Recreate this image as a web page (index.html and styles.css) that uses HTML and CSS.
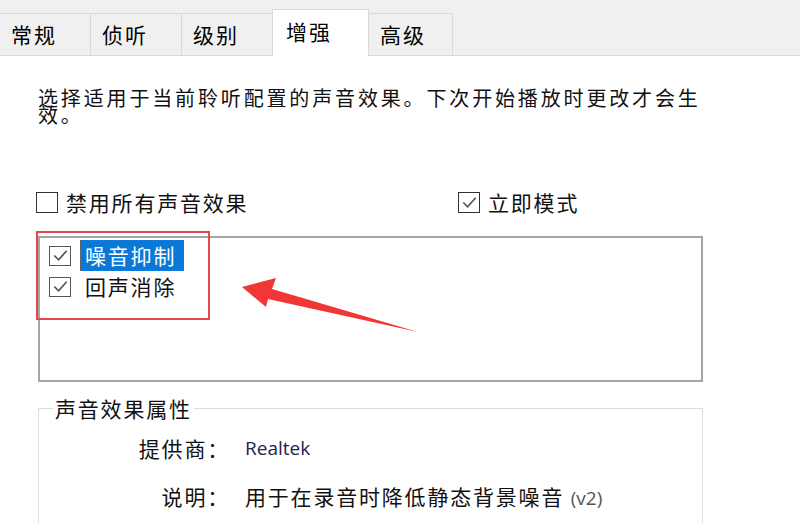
FILE: index.html
```html
<!DOCTYPE html>
<html lang="zh-CN">
<head>
    <meta charset="UTF-8">
    <meta name="viewport" content="width=device-width, initial-scale=1.0">
    <title>增强</title>
    <link rel="stylesheet" href="styles.css">
</head>
<body>
    <div class="tabs">
        <div class="tab t1">常规</div>
        <div class="tab t2">侦听</div>
        <div class="tab t3">级别</div>
        <div class="tab active">增强</div>
        <div class="tab t5">高级</div>
    </div>

    <div class="page">
        <p class="intro">选择适用于当前聆听配置的声音效果。下次开始播放时更改才会生效。</p>

        <div class="options">
            <label class="check">
                <span class="box"></span>
                <span>禁用所有声音效果</span>
            </label>
            <label class="check">
                <span class="box">
                    <svg viewBox="0 0 20 20"><polyline points="3.5,10 8,14.5 16.5,5"></polyline></svg>
                </span>
                <span>立即模式</span>
            </label>
        </div>

        <div class="list">
            <div class="item">
                <span class="box light">
                    <svg viewBox="0 0 20 20"><polyline points="3.5,10 8,14.5 16.5,5"></polyline></svg>
                </span>
                <span class="label selected">噪音抑制</span>
            </div>
            <div class="item">
                <span class="box light">
                    <svg viewBox="0 0 20 20"><polyline points="3.5,10 8,14.5 16.5,5"></polyline></svg>
                </span>
                <span class="label">回声消除</span>
            </div>
        </div>

        <fieldset class="props">
            <legend>声音效果属性</legend>
            <div class="prop">
                <span class="key">提供商：</span>
                <span class="val latin vendor">Realtek</span>
            </div>
            <div class="prop">
                <span class="key">说明：</span>
                <span class="val">用于在录音时降低静态背景噪音 <span class="latin muted">(v2)</span></span>
            </div>
        </fieldset>

        <!-- annotation overlay -->
        <div class="mark"></div>
        <svg class="arrow" viewBox="0 0 200 70">
            <polygon points="7,17 41,8 37,19 183,62 33,29 31,37"></polygon>
        </svg>
    </div>
</body>
</html>
```

FILE: styles.css
```css
body {
    margin: 0;
    height: 523px;
    background: #ffffff;
    color: #111;
    font-family: "Noto Sans CJK SC", "Microsoft YaHei", sans-serif;
    font-size: 21px;
    letter-spacing: 1.8px;
    overflow: hidden;
}

.tabs {
    display: flex;
    align-items: flex-end;
    height: 55px;
    background: #f0f0f0;
    border-bottom: 1px solid #d9d9d9;
}

.tab {
    box-sizing: border-box;
    height: 42px;
    line-height: 40px;
    padding-left: 11px;
    border: 1px solid #d9d9d9;
    border-bottom: none;
    margin-right: -1px;
    background: #f0f0f0;
    letter-spacing: 2px;
    color: #000;
}

.t1 { width: 91px; border-left: none; }
.t2 { width: 92px; }
.t3 { width: 92px; }
.t5 { width: 85px; }

.tab.active {
    width: 97px;
    height: 47px;
    line-height: 42px;
    padding-left: 13px;
    margin-bottom: -1px;
    background: #ffffff;
    position: relative;
    z-index: 1;
}

.page {
    position: relative;
    height: 434px;
    overflow: hidden;
    padding: 33px 97px 0 38px;
}

.intro {
    margin: 0;
    font-size: 20px;
    line-height: 17px;
    letter-spacing: 2.85px;
}

.options {
    display: grid;
    grid-template-columns: 422px auto;
    margin-top: 67px;
    height: 24px;
}

.check {
    display: flex;
    align-items: center;
    gap: 8px;
    margin-left: -2px;
    line-height: 24px;
}

.box {
    box-sizing: border-box;
    width: 22px;
    height: 21px;
    border: 1.5px solid #333;
    background: #fff;
    display: flex;
    align-items: center;
    justify-content: center;
    flex: none;
}

.box svg {
    width: 19px;
    height: 19px;
    fill: none;
    stroke: #555;
    stroke-width: 1.8;
}

.box.light {
    width: 22px;
    height: 20px;
    border-color: #555;
}

.list {
    margin-top: 22px;
    height: 140px;
    border: 2px solid #a6a6a6;
    padding: 2px 0 0 9px;
}

.item {
    display: flex;
    align-items: center;
    gap: 9px;
    height: 31px;
}

.label {
    padding: 0 8px 0 5px;
    line-height: 31px;
}

.label.selected {
    background: #0a78d7;
    color: #fff;
    outline: 1px dotted #6a6a6a;
    outline-offset: -1px;
}

.props {
    margin: 14px 0 0;
    padding: 0 0 40px 14px;
    border: 1px solid #dcdcdc;
}

.props legend {
    padding: 0 2px;
    line-height: 24px;
}

.prop {
    display: grid;
    grid-template-columns: 177px 1fr;
    column-gap: 15px;
    line-height: 24px;
    margin-top: 16px;
}

.prop + .prop {
    margin-top: 24px;
}

.key {
    text-align: right;
}

.latin {
    font-family: "Open Sans", "Noto Sans", sans-serif;
    font-size: 19px;
    letter-spacing: 0;
}

.vendor {
    color: #1d2352;
}

.muted {
    color: #555;
}

.mark {
    position: absolute;
    left: 36px;
    top: 175px;
    width: 174px;
    height: 89px;
    box-sizing: border-box;
    border: 2px solid #e2474b;
}

.arrow {
    position: absolute;
    left: 235px;
    top: 214px;
    width: 200px;
    height: 70px;
    fill: #f23535;
}
```
